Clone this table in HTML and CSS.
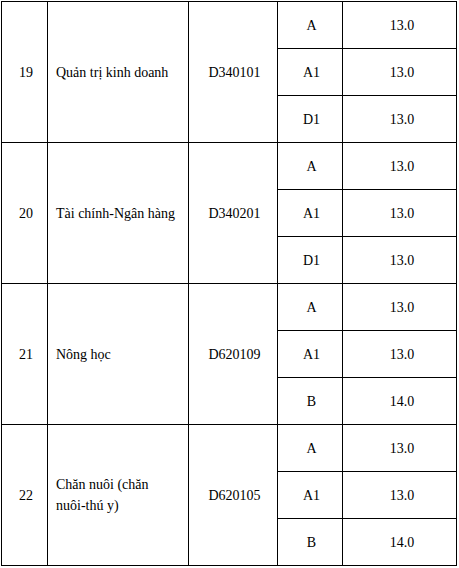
FILE: index.html
```html
<!DOCTYPE html>
<html>
<head>
<meta charset="utf-8">
<title>Bảng điểm chuẩn</title>
<link rel="stylesheet" href="styles.css">
</head>
<body>
<table class="scores">
  <colgroup>
    <col class="c-no">
    <col class="c-name">
    <col class="c-code">
    <col class="c-block">
    <col class="c-score">
  </colgroup>
  <tbody>
    <tr>
      <td class="no" rowspan="3">19</td>
      <td class="name" rowspan="3">Quản trị kinh doanh</td>
      <td class="code" rowspan="3">D340101</td>
      <td class="block">A</td>
      <td class="score">13.0</td>
    </tr>
    <tr><td class="block">A1</td><td class="score">13.0</td></tr>
    <tr><td class="block">D1</td><td class="score">13.0</td></tr>

    <tr>
      <td class="no" rowspan="3">20</td>
      <td class="name" rowspan="3">Tài chính-Ngân hàng</td>
      <td class="code" rowspan="3">D340201</td>
      <td class="block">A</td>
      <td class="score">13.0</td>
    </tr>
    <tr><td class="block">A1</td><td class="score">13.0</td></tr>
    <tr><td class="block">D1</td><td class="score">13.0</td></tr>

    <tr>
      <td class="no" rowspan="3">21</td>
      <td class="name" rowspan="3">Nông học</td>
      <td class="code" rowspan="3">D620109</td>
      <td class="block">A</td>
      <td class="score">13.0</td>
    </tr>
    <tr><td class="block">A1</td><td class="score">13.0</td></tr>
    <tr><td class="block">B</td><td class="score">14.0</td></tr>

    <tr>
      <td class="no" rowspan="3">22</td>
      <td class="name" rowspan="3">Chăn nuôi (chăn <span class="keep">nuôi-thú</span> y)</td>
      <td class="code" rowspan="3">D620105</td>
      <td class="block">A</td>
      <td class="score">13.0</td>
    </tr>
    <tr><td class="block">A1</td><td class="score">13.0</td></tr>
    <tr><td class="block">B</td><td class="score">14.0</td></tr>
  </tbody>
</table>
</body>
</html>
```

FILE: styles.css
```css
html, body {
  margin: 0;
  padding: 0;
  background: #fff;
}

body {
  padding: 1px 0 0 1px;
  font-family: "Liberation Serif", serif;
  font-size: 14px;
  color: #000;
}

.scores {
  border-collapse: separate;
  border-spacing: 0;
  table-layout: fixed;
  width: 456px;
  border-top: 1px solid #000;
  border-left: 1px solid #000;
}

.c-no { width: 46px; }
.c-name { width: 141px; }
.c-code { width: 89px; }
.c-block { width: 65px; }
.c-score { width: 114px; }

.scores tr {
  height: 47px;
}

.scores td {
  box-sizing: border-box;
  border-right: 1px solid #000;
  border-bottom: 1px solid #000;
  padding: 0 5px 0 8px;
  vertical-align: middle;
  text-align: center;
  font-family: "Liberation Serif", serif;
  font-size: 14px;
  line-height: 21px;
}

.scores td.name {
  text-align: left;
}

.keep {
  white-space: nowrap;
}

.scores td.score {
  padding-left: 10px;
}
```
